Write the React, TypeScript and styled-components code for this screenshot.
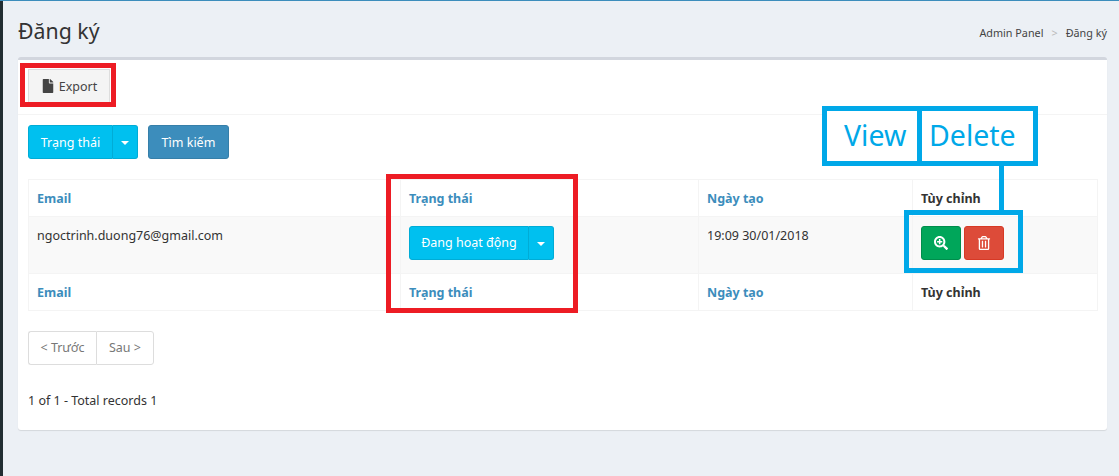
import React from 'react';
import styled, { createGlobalStyle } from 'styled-components';
import { FaFile, FaSearchPlus, FaRegTrashAlt } from 'react-icons/fa';

const Global = createGlobalStyle`
  html, body { margin: 0; padding: 0; background: #ecf0f5; }
  body { font-family: "Noto Sans", "Open Sans", sans-serif; font-size: 12.5px; color: #333; overflow: hidden; }
  * { box-sizing: border-box; }
`;
const Page = styled.div`
  position: relative; display: flex; width: 1119px; height: 476px; overflow: hidden;
  border-top: 1px solid #3c8dbc; background: #ecf0f5;
`;
const Rail = styled.div`width: 3px; background: #222d32; flex: none;`;
const Main = styled.main`flex: 1; padding: 0 12px 0 15px; min-width: 0;`;
const Header = styled.header`display: flex; justify-content: space-between; align-items: center; height: 56px; padding-top: 3px;`;
const Title = styled.h1`margin: 0; font-size: 21.3px; font-weight: 400; color: #333;`;
const Crumbs = styled.div`display: flex; gap: 8px; font-size: 10.8px; color: #444; padding-top: 3px;`;
const Sep = styled.span`color: #bbb;`;
const Box = styled.section`
  height: 373px; background: #fff; border-top: 3px solid #d2d6de; border-radius: 3px;
  box-shadow: 0 1px 1px rgba(0,0,0,.1);
`;
const ExportBar = styled.div`height: 55px; padding: 9px 10px 0; border-bottom: 1px solid #f4f4f4;`;
const ExportButton = styled.button`
  display: inline-flex; align-items: center; gap: 4px; height: 34px; width: 82px; justify-content: center;
  font: inherit; color: #444; background: #f4f4f4; border: 1px solid #ddd; border-radius: 0;
  svg { font-size: 14px; }
`;
const Body = styled.div`padding: 10px 10px 0;`;
const Filters = styled.div`display: flex; gap: 10px; margin-bottom: 20px;`;
const Split = styled.div`display: inline-flex;`;
const Btn = styled.button<{ $w: number }>`
  width: ${p => p.$w}px; height: 34px; padding: 0; font: inherit; color: #fff;
  background: #00c0ef; border: 1px solid #00acd6; border-radius: 3px 0 0 3px;
`;
const Caret = styled.button`
  position: relative; width: 25px; height: 34px; padding: 0; background: #00c0ef;
  border: 1px solid #00acd6; border-left: none; border-radius: 0 3px 3px 0;
  &::after {
    content: ""; position: absolute; left: 8px; top: 15px;
    border-top: 4px solid #fff; border-left: 4px solid transparent; border-right: 4px solid transparent;
  }
`;
const Search = styled.button`
  height: 34px; width: 81px; padding: 0; font: inherit; color: #fff; background: #3c8dbc;
  border: 1px solid #367fa9; border-radius: 3px;
`;
const Table = styled.table`
  width: 1069px; border-collapse: collapse; table-layout: fixed; border: 1px solid #f4f4f4;
`;
const Th = styled.th<{ $plain?: boolean }>`
  height: 37px; padding: 0 8px; text-align: left; font-weight: 700; font-size: 12.5px;
  color: ${p => (p.$plain ? '#333' : '#3c8dbc')}; border: 1px solid #f4f4f4;
`;
const Td = styled.td`
  height: 57px; padding: 9px 8px 8px; vertical-align: top; background: #f9f9f9; border: 1px solid #f4f4f4; line-height: 20px;
`;
const Actions = styled.div`display: flex; gap: 3px;`;
const IconButton = styled.button<{ $bg: string; $bd: string }>`
  display: flex; align-items: center; justify-content: center; width: 40px; height: 34px; padding: 0;
  color: #fff; font-size: 14px; background: ${p => p.$bg}; border: 1px solid ${p => p.$bd}; border-radius: 3px;
`;
const Pager = styled.div`display: inline-flex; margin-top: 20px;`;
const PageLink = styled.span<{ $w: number }>`
  display: block; width: ${p => p.$w}px; height: 34px; line-height: 32px; text-align: center; color: #777; background: #fff; border: 1px solid #ddd;
  &:first-child { border-radius: 3px 0 0 3px; border-right: none; }
  &:last-child { border-radius: 0 3px 3px 0; }
`;
const Records = styled.p`margin: 26px 0 0; line-height: 20px;`;
const Frame = styled.div<{ $x: number; $y: number; $w: number; $h: number; $c: string; $t: number }>`
  position: absolute; left: ${p => p.$x}px; top: ${p => p.$y}px; width: ${p => p.$w}px; height: ${p => p.$h}px;
  border: ${p => p.$t}px solid ${p => p.$c};
`;
const Label = styled.div`
  position: absolute; left: 822px; top: 105px; width: 216px; height: 60px; display: flex;
  border: 5px solid #00a8e8; background: #fff; color: #00a8e8; font-size: 28.5px; line-height: 49px;
`;
const LabelCell = styled.span<{ $w: number; $pad: number }>`
  width: ${p => p.$w}px; padding-left: ${p => p.$pad}px; white-space: nowrap;
  & + & { border-left: 5px solid #00a8e8; }
`;
const Stem = styled.div`position: absolute; left: 999px; top: 164px; width: 5px; height: 46px; background: #00a8e8;`;

export default function App() {
  return (
    <>
      <Global />
      <Page>
        <Rail />
        <Main>
          <Header>
            <Title>Đăng ký</Title>
            <Crumbs><span>Admin Panel</span><Sep>&gt;</Sep><span>Đăng ký</span></Crumbs>
          </Header>
          <Box>
            <ExportBar>
              <ExportButton><FaFile />Export</ExportButton>
            </ExportBar>
            <Body>
              <Filters>
                <Split><Btn $w={85}>Trạng thái</Btn><Caret /></Split>
                <Search>Tìm kiếm</Search>
              </Filters>
              <Table>
                <colgroup><col width="372" /><col width="298" /><col width="214" /><col width="185" /></colgroup>
                <thead><tr><Th>Email</Th><Th>Trạng thái</Th><Th>Ngày tạo</Th><Th $plain>Tùy chỉnh</Th></tr></thead>
                <tbody>
                  <tr>
                    <Td>ngoctrinh.duong76@gmail.com</Td>
                    <Td><Split><Btn $w={120}>Đang hoạt động</Btn><Caret /></Split></Td>
                    <Td>19:09 30/01/2018</Td>
                    <Td>
                      <Actions>
                        <IconButton $bg="#00a65a" $bd="#008d4c"><FaSearchPlus /></IconButton>
                        <IconButton $bg="#dd4b39" $bd="#d73925"><FaRegTrashAlt /></IconButton>
                      </Actions>
                    </Td>
                  </tr>
                </tbody>
                <tfoot><tr><Th>Email</Th><Th>Trạng thái</Th><Th>Ngày tạo</Th><Th $plain>Tùy chỉnh</Th></tr></tfoot>
              </Table>
              <Pager><PageLink $w={68}>&lt; Trước</PageLink><PageLink $w={58}>Sau &gt;</PageLink></Pager>
              <Records>1 of 1 - Total records 1</Records>
            </Body>
          </Box>
        </Main>
        <Frame $x={20} $y={62} $w={96} $h={44} $c="#ed1c24" $t={5} />
        <Frame $x={386} $y={173} $w={192} $h={139} $c="#ed1c24" $t={5} />
        <Label>
          <LabelCell $w={90} $pad={17}>View</LabelCell>
          <LabelCell $w={116} $pad={7}>Delete</LabelCell>
        </Label>
        <Stem />
        <Frame $x={904} $y={209} $w={119} $h={63} $c="#00a8e8" $t={5} />
      </Page>
    </>
  );
}
